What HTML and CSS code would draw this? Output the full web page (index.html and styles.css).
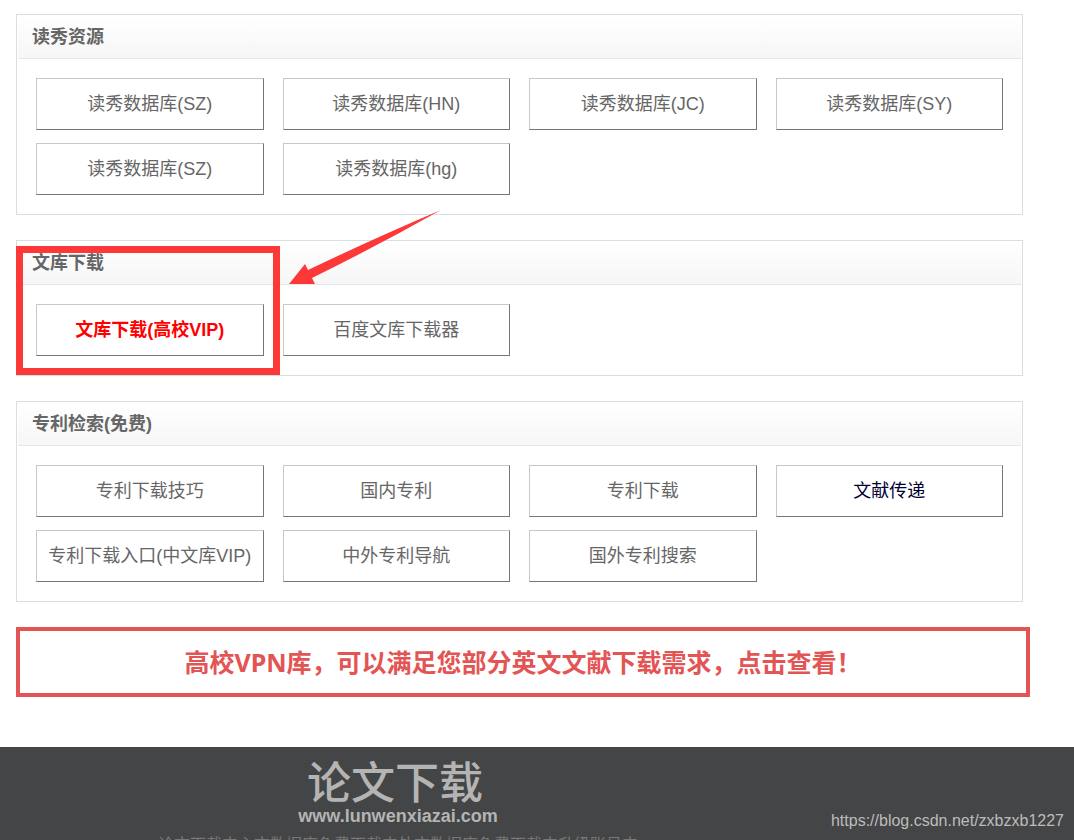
FILE: index.html
```html
<!DOCTYPE html>
<html lang="zh-CN">
<head>
<meta charset="utf-8">
<title>论文下载</title>
<link rel="stylesheet" href="styles.css">
</head>
<body>
<main class="content">
  <section class="panel">
    <h2 class="panel-title">读秀资源</h2>
    <div class="links">
      <button class="link-btn" type="button">读秀数据库(SZ)</button>
      <button class="link-btn" type="button">读秀数据库(HN)</button>
      <button class="link-btn" type="button">读秀数据库(JC)</button>
      <button class="link-btn" type="button">读秀数据库(SY)</button>
      <button class="link-btn" type="button">读秀数据库(SZ)</button>
      <button class="link-btn" type="button">读秀数据库(hg)</button>
    </div>
  </section>
  <section class="panel">
    <h2 class="panel-title">文库下载</h2>
    <div class="links">
      <button class="link-btn hot" type="button">文库下载(高校VIP)</button>
      <button class="link-btn" type="button">百度文库下载器</button>
    </div>
    <div class="marker"></div>
    <svg class="arrow" width="152" height="75" viewBox="0 0 152 75" aria-hidden="true"><path d="M0 74 16 54 19 60Q88 27 152 0 90 35 23 68L26 74Z" fill="#fc3838"/></svg>
  </section>
  <section class="panel">
    <h2 class="panel-title">专利检索(免费)</h2>
    <div class="links">
      <button class="link-btn" type="button">专利下载技巧</button>
      <button class="link-btn" type="button">国内专利</button>
      <button class="link-btn" type="button">专利下载</button>
      <button class="link-btn navy" type="button">文献传递</button>
      <button class="link-btn" type="button">专利下载入口(中文库VIP)</button>
      <button class="link-btn" type="button">中外专利导航</button>
      <button class="link-btn" type="button">国外专利搜索</button>
    </div>
  </section>
  <a class="banner" href="#vpn">高校VPN库，可以满足您部分英文文献下载需求，点击查看！</a>
</main>
<footer class="footer">
  <div class="brand">
    <div class="brand-name">论文下载</div>
    <div class="brand-url">www.lunwenxiazai.com</div>
    <p class="about">论文下载中心文数据库免费下载中外文数据库免费下载中升级账号中</p>
  </div>
  <span class="source">https://blog.csdn.net/zxbzxb1227</span>
</footer>
</body>
</html>
```

FILE: styles.css
```css
* { box-sizing: border-box; }

body {
  margin: 0;
  height: 100vh;
  overflow: hidden;
  display: flex;
  flex-direction: column;
  background: #fff;
  color: #666;
  font-family: "Liberation Sans", "Noto Sans CJK SC", sans-serif;
  font-size: 18px;
}

.content {
  flex: none;
  display: flex;
  flex-direction: column;
  gap: 25px;
  padding: 14px 44px 50px 16px;
}

.panel {
  position: relative;
  margin-right: 7px;
  padding: 1px;
  border: 1px solid #d9dfdf;
}

.panel-title {
  margin: 0;
  height: 43px;
  padding-left: 14px;
  border-bottom: 1px solid #e4e8e8;
  background: linear-gradient(#fff, #f6f6f6);
  font-size: 18px;
  line-height: 42px;
}

.links {
  display: grid;
  grid-template-columns: repeat(4, 1fr);
  gap: 13px 19px;
  padding: 19px 18px 18px;
}

.link-btn {
  height: 52px;
  padding: 0 0 5px;
  border: 1px solid;
  border-color: #c8c8c8 #767676 #767676 #c8c8c8;
  background: #fff;
  color: #666;
  font: inherit;
  white-space: nowrap;
}

.link-btn.hot { color: #f00; font-weight: bold; }
.link-btn.navy { color: #000033; }

.marker {
  position: absolute;
  top: 5px;
  left: -1px;
  width: 264px;
  height: 129px;
  border: 7px solid #fc3838;
}

.arrow {
  position: absolute;
  top: -31px;
  left: 272px;
}

.banner {
  height: 70px;
  border: 4px solid #e35454;
  color: #e35454;
  font-family: "Noto Sans", "Noto Sans CJK SC", sans-serif;
  font-size: 25px;
  font-weight: bold;
  line-height: 62px;
  text-align: center;
  text-decoration: none;
}

.footer {
  position: relative;
  flex: 1;
  min-height: 0;
  padding: 15px 0 0 158px;
  background: #444546;
}

.brand {
  width: 480px;
  text-align: center;
  color: #b4b4b4;
}

.brand-name {
  padding-right: 6px;
  font-size: 44px;
  font-weight: 500;
  line-height: 44px;
}

.brand-url {
  font-size: 18px;
  font-weight: bold;
  line-height: 20px;
}

.about {
  margin: 7px 0 0;
  color: #777;
  font-size: 16px;
  line-height: 24px;
  white-space: nowrap;
}

.source {
  position: absolute;
  right: 10px;
  bottom: 10px;
  color: #bcbcbc;
  font-size: 16px;
  line-height: 18px;
}
```
